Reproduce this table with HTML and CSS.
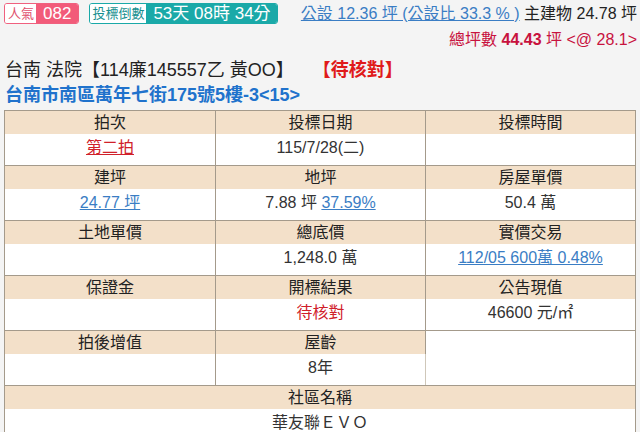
FILE: index.html
```html
<!DOCTYPE html>
<html lang="zh-Hant">
<head>
<meta charset="utf-8">
<title>拍賣物件</title>
<link rel="stylesheet" href="styles.css">
</head>
<body>
<div class="top">
  <div class="row1">
    <span class="badge pink"><span class="lbl">人氣</span><span class="val">082</span></span>
    <span class="badge teal"><span class="lbl">投標倒數</span><span class="val">53天 08時 34分</span></span>
    <span class="area"><a class="gs" href="#">公設 12.36 坪 (公設比 33.3 % )</a> 主建物 24.78 坪</span>
  </div>
  <div class="row2">總坪數 <b>44.43</b> 坪 &lt;@ 28.1&gt;</div>
</div>
<div class="title">台南 法院【114廉145557乙 黃OO】 <span class="status">【待核對】</span></div>
<div class="addr">台南市南區萬年七街175號5樓-3&lt;15&gt;</div>
<table class="info">
  <colgroup><col class="c1"><col class="c2"><col class="c3"></colgroup>
  <tr class="hd"><th>拍次</th><th>投標日期</th><th>投標時間</th></tr>
  <tr class="dt"><td><a class="red" href="#">第二拍</a></td><td>115/7/28(二)</td><td></td></tr>
  <tr class="hd"><th>建坪</th><th>地坪</th><th>房屋單價</th></tr>
  <tr class="dt"><td><a class="blue" href="#">24.77 坪</a></td><td>7.88 坪 <a class="blue" href="#">37.59%</a></td><td>50.4 萬</td></tr>
  <tr class="hd"><th>土地單價</th><th>總底價</th><th>實價交易</th></tr>
  <tr class="dt"><td></td><td>1,248.0 萬</td><td><a class="blue" href="#">112/05 600萬 0.48%</a></td></tr>
  <tr class="hd"><th>保證金</th><th>開標結果</th><th>公告現值</th></tr>
  <tr class="dt"><td></td><td><span class="redtxt">待核對</span></td><td>46600 元/㎡</td></tr>
  <tr class="hd"><th>拍後增值</th><th>屋齡</th><td class="span" rowspan="2"></td></tr>
  <tr class="dt"><td></td><td>8年</td></tr>
  <tr class="hd"><th colspan="3">社區名稱</th></tr>
  <tr class="dt"><td colspan="3">華友聯ＥＶＯ</td></tr>
</table>
</body>
</html>
```
FILE: styles.css
```css
html, body {
  margin: 0;
  padding: 0;
  background: #f4f4f4;
}
body {
  font-family: "Liberation Sans", "Noto Sans CJK TC", sans-serif;
  color: #222;
  padding: 3px 3px 0 4px;
  overflow: hidden;
}
.row1 {
  display: flex;
  align-items: center;
  height: 21px;
}
.badge {
  display: inline-flex;
  height: 21px;
  box-sizing: border-box;
  border-radius: 3px;
  overflow: hidden;
  border: 1px solid;
}
.badge .lbl {
  background: #fff;
  font-size: 13px;
  line-height: 19px;
  padding: 0 2px 0 3px;
}
.badge .val {
  color: #fff;
  font-size: 17px;
  line-height: 19px;
  padding: 0 7px;
}
.pink { border-color: #f0607e; }
.pink .lbl { color: #e0506e; }
.pink .val { background: #f25b79; }
.teal { border-color: #1aa9a8; margin-left: 10px; }
.teal .lbl { color: #178f8f; padding: 0 2px; }
.teal .val { background: #1aa9a8; padding: 0 6px 0 7px; }
.area {
  margin-left: auto;
  font-size: 16px;
  line-height: 20px;
  color: #222;
}
.gs {
  color: #3a7dc4;
  text-decoration: underline;
}
.row2 {
  margin-top: 6px;
  text-align: right;
  font-size: 16px;
  line-height: 20px;
  color: #c8123e;
}
.row2 b { font-weight: bold; }
.title {
  margin-top: 8px;
  font-size: 18px;
  line-height: 24px;
  color: #222;
  padding-left: 1px;
}
.status {
  color: #e01a1a;
  font-weight: bold;
  margin-left: 14px;
}
.addr {
  margin-top: 1px;
  font-size: 18px;
  line-height: 24px;
  font-weight: bold;
  color: #2072cc;
  padding-left: 1px;
}
.info {
  margin-top: 3px;
  width: 631px;
  border-collapse: collapse;
  table-layout: fixed;
  background: #fff;
  font-size: 16px;
  line-height: 20px;
}
.c1 { width: 211px; }
.c2 { width: 210px; }
.c3 { width: 210px; }
.info th, .info td {
  text-align: center;
  padding: 0;
  line-height: 20px;
  border-left: 1px solid #a49a8b;
  border-right: 1px solid #a49a8b;
}
.info tr:first-child th { border-top: 1px solid #a49a8b; }
.info .hd th, .info .hd td {
  height: 23px;
  font-weight: normal;
  color: #222;
}
.info .hd th { background: #f3e0c9; }
.info .dt td {
  height: 28px;
  padding-bottom: 3px;
  border-bottom: 1px solid #a49a8b;
  color: #333;
  vertical-align: middle;
}
.info td.span {
  background: #fff;
  border-bottom: 1px solid #a49a8b;
}
.info .hd th + th, .info .dt td + td, .info .hd th + td { border-left-color: #cfc7b9; }
a.red { color: #d0202a; text-decoration: underline; }
a.blue { color: #3a7dc4; text-decoration: underline; }
.redtxt { color: #d0202a; }
```
